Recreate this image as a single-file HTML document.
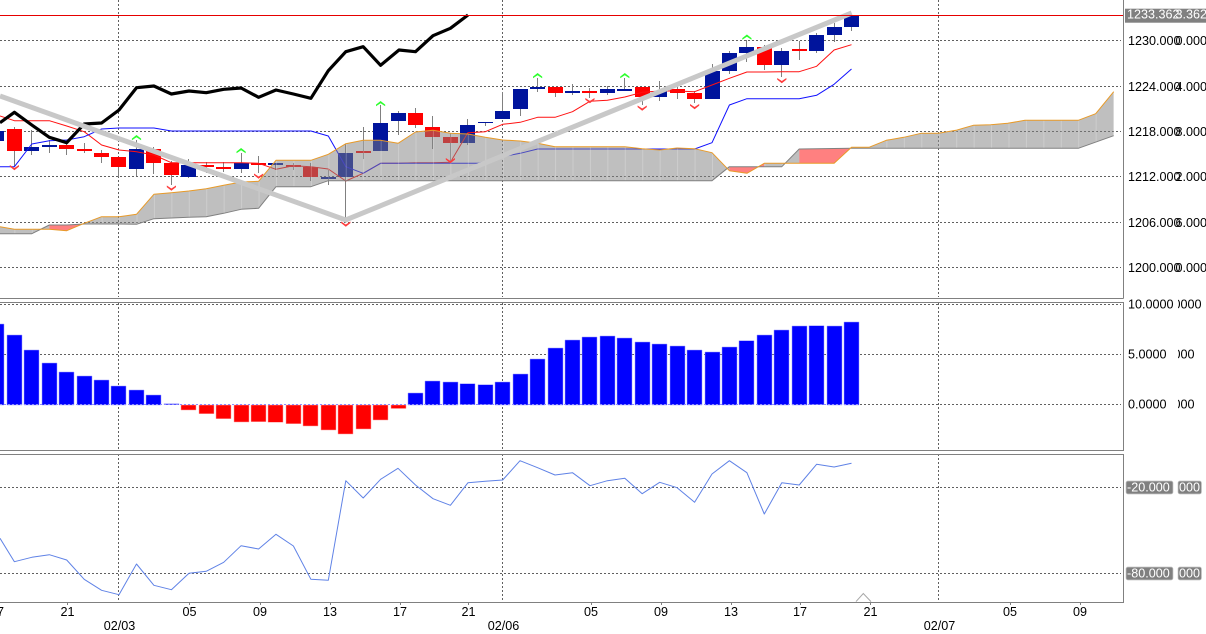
<!DOCTYPE html>
<html><head><meta charset="utf-8"><title>Chart</title>
<style>
html,body{margin:0;padding:0;background:#fff;width:1206px;height:634px;overflow:hidden}
svg{display:block}
text{font-family:"Liberation Sans",sans-serif;font-size:12.6px;fill:#000}
.w{fill:#fff}
.g{stroke:#606060;stroke-width:1;stroke-dasharray:2 2;fill:none;shape-rendering:crispEdges}
.f{stroke:#808080;stroke-width:1;fill:none;shape-rendering:crispEdges}
.l{fill:none;stroke-width:1;stroke-linejoin:round}
</style></head><body>
<svg width="1206" height="634" viewBox="0 0 1206 634" xmlns="http://www.w3.org/2000/svg">
<defs>
<clipPath id="pink"><rect x="49.3" y="0" width="34.9" height="300"/><rect x="729.4" y="0" width="34.9" height="300"/><rect x="799.2" y="0" width="52.3" height="300"/></clipPath>
<clipPath id="c2"><rect x="1178" y="295" width="28" height="130"/></clipPath>
<pattern id="st" patternUnits="userSpaceOnUse" width="17.44" height="10" x="14.4" y="0"><rect x="0" y="0" width="1" height="10" fill="rgba(255,255,255,.22)"/></pattern>
<polygon id="dn" points="-4.6,0 0,3 4.6,0 4.6,1.6 0,5.2 -4.6,1.6" fill="#ff3c3c"/>
<polygon id="up" points="-4.6,5.2 0,2.2 4.6,5.2 4.6,3.6 0,0 -4.6,3.6" fill="#2cff2c"/>
</defs>

<!-- grid -->
<path class="g" d="M0 40.5H1121M0 86.5H1121M0 131.5H1121M0 176.5H1121M0 222.5H1121M0 267.5H1121"/>
<path class="g" d="M118.5 0V297M502.5 0V297M938.5 0V297"/>
<path class="g" d="M0 304.5H1121M0 354.5H1121M0 404.5H1121"/>
<path class="g" d="M118.5 303V450M502.5 303V450M938.5 303V450"/>
<path class="g" d="M0 487.5H1121M0 573.5H1121"/>
<path class="g" d="M118.5 454V602M502.5 454V602M938.5 454V602"/>

<!-- wicks -->
<path fill="none" stroke="#808080" stroke-width="1" shape-rendering="crispEdges" d="M14.5 127V166M31.5 130V155M49.5 140V153M66.5 141V155M84.5 143V153M101.5 150V163M118.5 157V177M136.5 140V176M153.5 147V174M171.5 161V185M188.5 159V178M206.5 162V173M223.5 162V172M241.5 153V173M258.5 156V173M275.5 163V170M293.5 163V170M310.5 163V181M328.5 170V185M345.5 144V223M363.5 127V159M380.5 105V151M398.5 111V135M415.5 108V128M432.5 116V149M450.5 133V162M467.5 119V145M485.5 122V126M502.5 92V119M520.5 89V116M537.5 78V92M555.5 87V97M572.5 84V95M589.5 88V98M607.5 86V95M624.5 78V91M642.5 87V105M659.5 81V101M677.5 86V99M694.5 91V103M712.5 64V99M729.5 51V74M746.5 40V62M764.5 45V70M781.5 48V77M799.5 41V60M816.5 33V53M834.5 23V42M851.5 16V31"/>

<!-- candles -->
<path fill="#00149c" shape-rendering="crispEdges" d="M-11 131h15v10h-15zM24 147h15v4h-15zM42 145h15v2h-15zM129 149h15v20h-15zM181 165h15v12h-15zM234 163h15v6h-15zM268 163h15v2h-15zM321 177h15v2h-15zM338 153h15v24h-15zM373 123h15v28h-15zM391 113h15v8h-15zM460 125h15v18h-15zM478 122h15v1h-15zM495 111h15v8h-15zM513 89h15v20h-15zM530 87h15v2h-15zM565 91h15v2h-15zM600 89h15v4h-15zM617 89h15v2h-15zM652 91h15v6h-15zM705 71h15v28h-15zM722 53h15v18h-15zM739 47h15v6h-15zM774 51h15v14h-15zM809 35h15v16h-15zM827 27h15v8h-15zM844 16h15v11h-15z"/>
<path fill="#ff0000" shape-rendering="crispEdges" d="M7 129h15v22h-15zM59 145h15v4h-15zM77 149h15v2h-15zM94 153h15v4h-15zM111 157h15v10h-15zM146 149h15v14h-15zM164 163h15v12h-15zM199 165h15v2h-15zM216 167h15v2h-15zM251 163h15v2h-15zM286 165h15v2h-15zM303 167h15v10h-15zM356 151h15v2h-15zM408 113h15v12h-15zM425 127h15v10h-15zM443 137h15v6h-15zM548 87h15v6h-15zM582 91h15v2h-15zM635 87h15v10h-15zM670 89h15v4h-15zM687 93h15v6h-15zM757 47h15v18h-15zM792 49h15v2h-15z"/>

<!-- tenkan / kijun -->
<polyline class="l" stroke="#ff1010" points="0,116 14.4,120.7 31.8,120.7 49.3,120.7 66.7,126 84.2,131.7 101.6,145 119,150 136.5,151.7 153.9,155 171.4,162.7 188.8,162.7 206.2,162.7 223.7,162.7 241.1,162.7 258.6,163.3 276,169.3 293.4,165.7 310.9,166.7 328.3,169 345.8,181 363.2,173.3 380.6,163.3 398.1,163.3 415.5,162.7 433,162.7 450.4,162.3 467.8,132.7 485.3,131.7 502.7,124.3 520.2,122.3 537.6,117.3 555,117.3 572.5,111.7 589.9,101.3 607.4,100.3 624.8,97 642.2,92.3 659.7,91 677.1,91 694.6,91.7 712,85 729.4,78.3 746.9,72 764.3,72 781.8,71.7 799.2,71.7 816.6,66.3 834.1,50 851.5,44.7"/>
<polyline class="l" stroke="#1010ff" points="-3,166.7 14.4,166.7 31.8,144 49.3,140.7 66.7,140 84.2,136.7 101.6,129 119,128 153.9,128 171.4,131 310.9,131 328.3,136 345.8,166.7 363.2,173.3 380.6,163.3 478,163.3 502.7,156.7 520.2,153.3 537.6,149 694.6,149 712,142.7 729.4,105 746.9,98.7 799.2,98.7 816.6,95.3 834.1,84.3 851.5,69"/>

<!-- cloud -->
<polygon id="cl" fill="rgba(128,128,128,.5)" points="0,226.7 14.4,229.3 31.8,229.3 49.3,229.3 66.7,230.7 84.2,223.3 101.6,216.7 119,216.7 136.5,214.3 153.9,194.3 171.4,192.7 188.8,191 206.2,188.7 223.7,185.3 241.1,182 258.6,181.3 276,160.3 293.4,160.3 310.9,160.3 328.3,154.3 345.8,143.7 363.2,140.3 380.6,140.3 398.1,143.3 415.5,132 433,130.3 450.4,133.3 467.8,134 485.3,137.3 502.7,140 520.2,141 537.6,143.3 555,146.7 572.5,146.7 589.9,146.7 607.4,146.7 624.8,146.7 642.2,148.7 659.7,150 677.1,148 694.6,148.7 712,152.7 729.4,170.7 746.9,173.3 764.3,163.3 781.8,163.3 799.2,163.3 816.6,163.3 834.1,163.3 851.5,147.3 869,147.3 886.3,140.3 903.7,137.3 921,133.3 938.5,133.3 956,130.3 973.3,125.3 990.7,124.7 1007.7,123.3 1025,120.3 1042.3,120.3 1059.7,120.3 1078.3,120.3 1095.7,113.7 1113.7,91.7 1113.7,135.7 1078.3,148.3 851.5,148.3 799.2,149 781.8,166.7 764.3,166.7 746.9,166.7 729.4,166.7 712,180.7 345.8,180.7 328.3,180.7 310.9,186.7 293.4,186.7 276,186.7 258.6,208.3 241.1,209.3 223.7,213.3 206.2,216.7 188.8,217.3 171.4,218 153.9,218.7 136.5,224.3 119,224 101.6,224 84.2,224 66.7,225 49.3,225 31.8,233.7 14.4,233.7 0,233.7"/>
<polygon fill="url(#st)" points="0,226.7 14.4,229.3 31.8,229.3 49.3,229.3 66.7,230.7 84.2,223.3 101.6,216.7 119,216.7 136.5,214.3 153.9,194.3 171.4,192.7 188.8,191 206.2,188.7 223.7,185.3 241.1,182 258.6,181.3 276,160.3 293.4,160.3 310.9,160.3 328.3,154.3 345.8,143.7 363.2,140.3 380.6,140.3 398.1,143.3 415.5,132 433,130.3 450.4,133.3 467.8,134 485.3,137.3 502.7,140 520.2,141 537.6,143.3 555,146.7 572.5,146.7 589.9,146.7 607.4,146.7 624.8,146.7 642.2,148.7 659.7,150 677.1,148 694.6,148.7 712,152.7 729.4,170.7 746.9,173.3 764.3,163.3 781.8,163.3 799.2,163.3 816.6,163.3 834.1,163.3 851.5,147.3 869,147.3 886.3,140.3 903.7,137.3 921,133.3 938.5,133.3 956,130.3 973.3,125.3 990.7,124.7 1007.7,123.3 1025,120.3 1042.3,120.3 1059.7,120.3 1078.3,120.3 1095.7,113.7 1113.7,91.7 1113.7,135.7 1078.3,148.3 851.5,148.3 799.2,149 781.8,166.7 764.3,166.7 746.9,166.7 729.4,166.7 712,180.7 345.8,180.7 328.3,180.7 310.9,186.7 293.4,186.7 276,186.7 258.6,208.3 241.1,209.3 223.7,213.3 206.2,216.7 188.8,217.3 171.4,218 153.9,218.7 136.5,224.3 119,224 101.6,224 84.2,224 66.7,225 49.3,225 31.8,233.7 14.4,233.7 0,233.7"/>
<g clip-path="url(#pink)">
<polygon fill="#ff8080" points="49.3,229.3 66.7,230.7 84.2,223.3 84.2,224 66.7,225 49.3,225"/>
<polygon fill="#ff8080" points="729.4,170.7 746.9,173.3 764.3,163.3 764.3,166.7 746.9,166.7 729.4,166.7"/>
<polygon fill="#ff8080" points="799.2,163.3 816.6,163.3 834.1,163.3 851.5,147.3 851.5,148.3 799.2,149"/>
</g>
<polyline class="l" stroke="#808080" points="1113.7,135.7 1078.3,148.3 851.5,148.3 799.2,149 781.8,166.7 764.3,166.7 746.9,166.7 729.4,166.7 712,180.7 345.8,180.7 328.3,180.7 310.9,186.7 293.4,186.7 276,186.7 258.6,208.3 241.1,209.3 223.7,213.3 206.2,216.7 188.8,217.3 171.4,218 153.9,218.7 136.5,224.3 119,224 101.6,224 84.2,224 66.7,225 49.3,225 31.8,233.7 14.4,233.7 0,233.7"/>
<polyline class="l" stroke="#e89a28" points="0,226.7 14.4,229.3 31.8,229.3 49.3,229.3 66.7,230.7 84.2,223.3 101.6,216.7 119,216.7 136.5,214.3 153.9,194.3 171.4,192.7 188.8,191 206.2,188.7 223.7,185.3 241.1,182 258.6,181.3 276,160.3 293.4,160.3 310.9,160.3 328.3,154.3 345.8,143.7 363.2,140.3 380.6,140.3 398.1,143.3 415.5,132 433,130.3 450.4,133.3 467.8,134 485.3,137.3 502.7,140 520.2,141 537.6,143.3 555,146.7 572.5,146.7 589.9,146.7 607.4,146.7 624.8,146.7 642.2,148.7 659.7,150 677.1,148 694.6,148.7 712,152.7 729.4,170.7 746.9,173.3 764.3,163.3 781.8,163.3 799.2,163.3 816.6,163.3 834.1,163.3 851.5,147.3 869,147.3 886.3,140.3 903.7,137.3 921,133.3 938.5,133.3 956,130.3 973.3,125.3 990.7,124.7 1007.7,123.3 1025,120.3 1042.3,120.3 1059.7,120.3 1078.3,120.3 1095.7,113.7 1113.7,91.7"/>

<!-- fractal arrows -->
<use href="#up" x="136.5" y="135"/><use href="#up" x="241.1" y="148"/><use href="#up" x="380.6" y="101"/><use href="#up" x="537.6" y="73"/><use href="#up" x="624.8" y="73"/><use href="#up" x="746.9" y="34.5"/>
<use href="#dn" x="14.4" y="165"/><use href="#dn" x="171.4" y="185.5"/><use href="#dn" x="258.6" y="173.5"/><use href="#dn" x="345.8" y="221.5"/><use href="#dn" x="450.4" y="158"/><use href="#dn" x="589.9" y="98"/><use href="#dn" x="642.2" y="105.5"/><use href="#dn" x="694.6" y="104"/><use href="#dn" x="781.8" y="78"/>

<!-- black chikou -->
<polyline fill="none" stroke="#000" stroke-width="3.2" stroke-linejoin="round" points="0,122.7 14.4,112.3 31.8,125 49.3,137.3 66.7,142.7 84.2,124 101.6,123 119,110 136.5,87.7 153.9,86 171.4,94 189,91 206.2,92.7 223.7,89.3 241.1,88 258.6,97.3 276,90 293.4,94 310.9,98.3 328.3,70.7 345.8,51.7 363.2,46.7 380.6,65.3 399,50 415.5,51.7 433,35.7 450.4,28.3 468,15"/>

<!-- zigzag -->
<polyline fill="none" stroke="#c8c8c8" stroke-width="5" stroke-linejoin="miter" points="0,96 345.7,220 851.7,13"/>

<!-- price line -->
<path d="M0 15.5H1123" stroke="#e60000" stroke-width="1" shape-rendering="crispEdges"/>

<!-- MACD bars -->
<path fill="#0000ff" stroke="#9a9aff" stroke-width=".5" d="M-11 324h15v81h-15zM7 335h15v70h-15zM24 350h15v55h-15zM42 363h15v42h-15zM59 372h15v33h-15zM77 376h15v29h-15zM94 380h15v25h-15zM111 386h15v19h-15zM129 390h15v15h-15zM146 395h15v10h-15zM164 403.7h15v1h-15zM408 393h15v12h-15zM425 381h15v24h-15zM443 382h15v23h-15zM460 383.7h15v21h-15zM478 384.7h15v20h-15zM495 382h15v23h-15zM513 374h15v31h-15zM530 359h15v46h-15zM548 348h15v57h-15zM565 340h15v65h-15zM582 337h15v68h-15zM600 336h15v69h-15zM617 338h15v67h-15zM635 342h15v63h-15zM652 344h15v61h-15zM670 346h15v59h-15zM687 350h15v55h-15zM705 352h15v53h-15zM722 347h15v58h-15zM739 340.7h15v64h-15zM757 335h15v70h-15zM774 330h15v75h-15zM792 326h15v79h-15zM809 325.7h15v79h-15zM827 326h15v79h-15zM844 322h15v83h-15z"/>
<path fill="#ff0000" stroke="#ffa0a0" stroke-width=".5" d="M181 405h15v5h-15zM199 405h15v8.7h-15zM216 405h15v13.7h-15zM234 405h15v17h-15zM251 405h15v16.7h-15zM268 405h15v17.3h-15zM286 405h15v18.7h-15zM303 405h15v21h-15zM321 405h15v25h-15zM338 405h15v29h-15zM356 405h15v24h-15zM373 405h15v15h-15zM391 405h15v3.5h-15z"/>
<path d="M0 404.5H860" fill="none" stroke="#8c8cff" stroke-width="1" stroke-dasharray="2 2" shape-rendering="crispEdges"/>

<!-- RSI line -->
<polyline class="l" stroke="#5f82e6" points="0,538.3 14.4,561.7 31.8,557.3 49.3,554.7 66.7,560 84.2,579.3 101.6,590.3 119,594.7 136.5,564 153.9,585.3 171.4,589.7 189,573.3 206.2,571.3 223.7,562.3 241.1,545.7 258.6,549 276,534.3 293.4,546 310.9,579.3 328.3,580.3 345.8,480.7 363.2,498 380.6,479.3 398,468.3 415.5,485 433,498.7 450.4,505.3 468,482.7 485.3,481.3 502.7,480 520,460.7 537.6,467.7 555,475 572.5,472.7 590,485.7 607.4,480.7 624.8,478.3 642.2,493.7 659.7,482.3 677.1,487.7 694.6,502.3 712,474 729.4,460.7 746.9,472.7 764.3,514 781.8,482.7 799.2,485 816.6,464.3 834.1,467 851.5,463.3"/>

<!-- triangle marker -->
<polyline fill="none" stroke="#a8a8a8" stroke-width="1" points="856,601.6 863.3,593.5 871,601.6"/>

<!-- frame -->
<path class="f" d="M0 298.5H1123.5M1123.5 0V298.5M0 302.5H1123.5V450.5H0M0 454.5H1123.5V602.5H0"/>
<path class="f" d="M67.5 603v2M189.5 603v2M260.5 603v2M330.5 603v2M400.5 603v2M468.5 603v2M591.5 603v2M661.5 603v2M731.5 603v2M800.5 603v2M870.5 603v2M1010.5 603v2M1080.5 603v2"/>

<!-- right axis labels -->
<rect x="1125" y="8.7" width="81" height="14" fill="#808080"/>
<text class="w" x="1127" y="18.6">1233.362</text><text class="w" x="1175.5" y="18.6">3.362</text>
<text x="1128" y="45">1230.000</text><text x="1175.5" y="45">0.000</text>
<text x="1128" y="91">1224.000</text><text x="1175.5" y="91">4.000</text>
<text x="1128" y="136">1218.000</text><text x="1175.5" y="136">8.000</text>
<text x="1128" y="181">1212.000</text><text x="1175.5" y="181">2.000</text>
<text x="1128" y="227">1206.000</text><text x="1175.5" y="227">6.000</text>
<text x="1128" y="272">1200.000</text><text x="1175.5" y="272">0.000</text>

<text x="1128" y="308.5">10.0000</text><text x="1173.5" y="308.5" clip-path="url(#c2)">0000</text>
<text x="1128" y="358.5">5.0000</text><text x="1173.5" y="358.5" clip-path="url(#c2)">000</text>
<text x="1128" y="408.5">0.0000</text><text x="1173.5" y="408.5" clip-path="url(#c2)">000</text>

<rect x="1126" y="481" width="47" height="13" rx="2" fill="#808080" stroke="#c8c8c8" stroke-width=".7"/>
<rect x="1178" y="481" width="23.5" height="13" rx="2" fill="#808080" stroke="#c8c8c8" stroke-width=".7"/>
<text class="w" x="1127" y="491.5">-20.000</text><text class="w" x="1179" y="491.5">000</text>
<rect x="1126" y="567" width="47" height="13" rx="2" fill="#808080" stroke="#c8c8c8" stroke-width=".7"/>
<rect x="1178" y="567" width="23.5" height="13" rx="2" fill="#808080" stroke="#c8c8c8" stroke-width=".7"/>
<text class="w" x="1127" y="577.5">-80.000</text><text class="w" x="1179" y="577.5">000</text>

<!-- time axis -->
<g text-anchor="middle">
<text x="-3" y="616">17</text><text x="67.5" y="616">21</text><text x="189.5" y="616">05</text><text x="260" y="616">09</text><text x="330" y="616">13</text><text x="400" y="616">17</text><text x="468.5" y="616">21</text><text x="591" y="616">05</text><text x="661" y="616">09</text><text x="731" y="616">13</text><text x="800" y="616">17</text><text x="870.5" y="616">21</text><text x="1010" y="616">05</text><text x="1080" y="616">09</text>
<text x="119.5" y="630">02/03</text><text x="503.5" y="630">02/06</text><text x="939.5" y="630">02/07</text>
</g>
</svg>
</body></html>
